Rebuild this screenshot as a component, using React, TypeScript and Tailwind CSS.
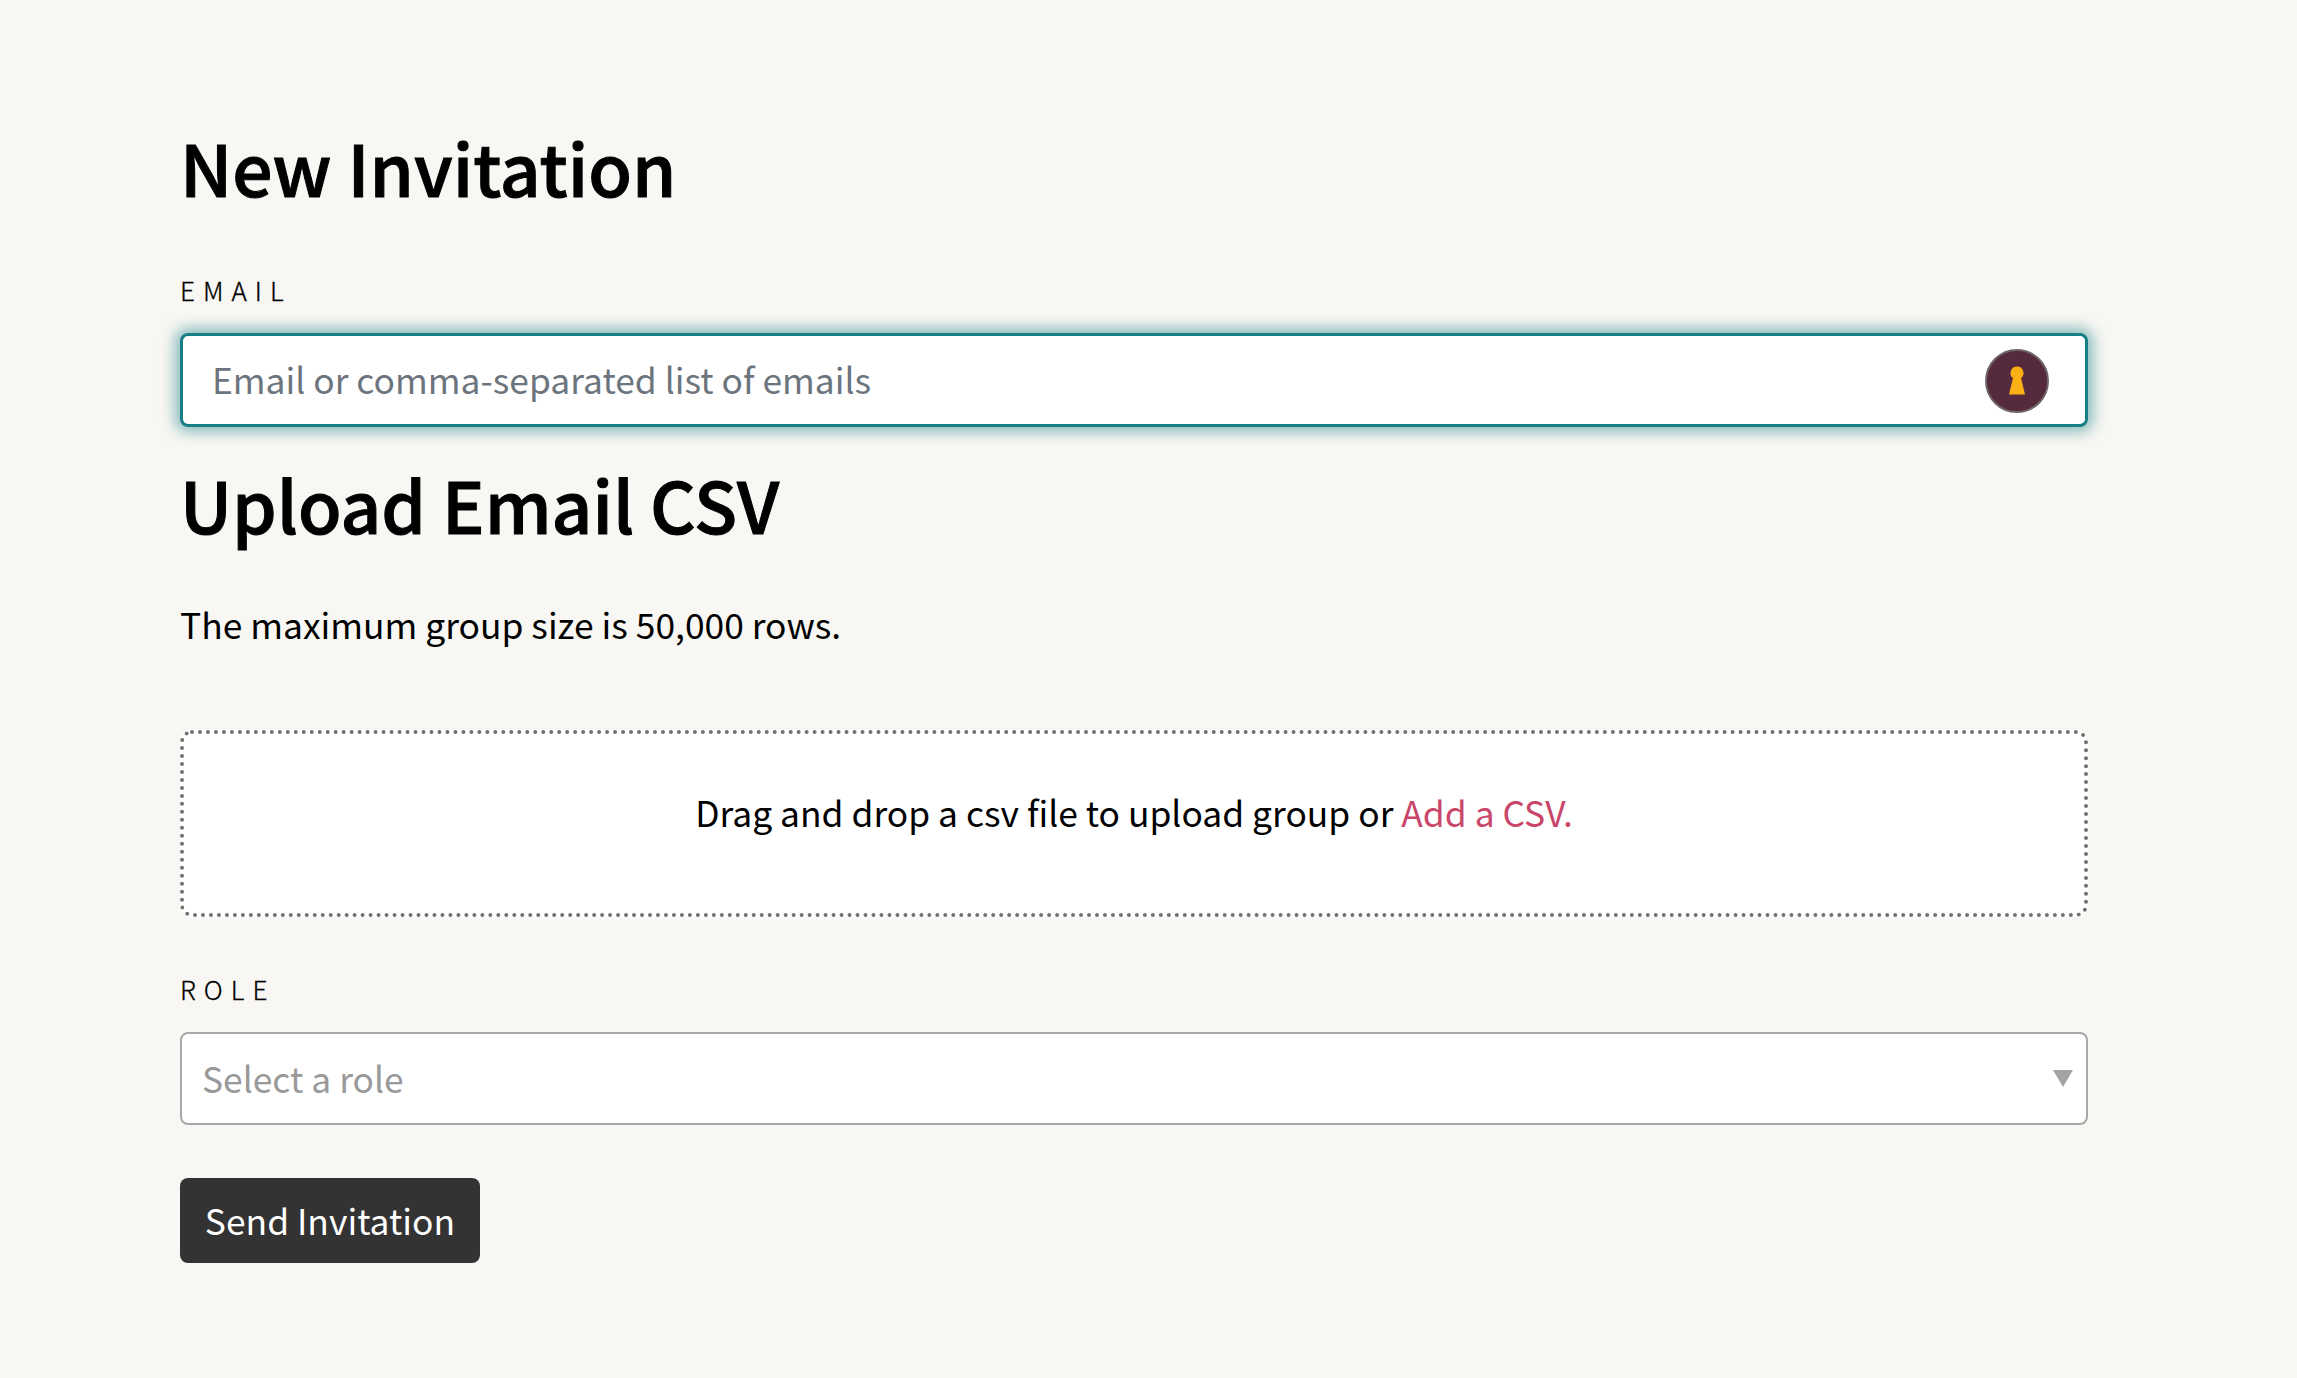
import React from 'react';

const font = "font-['Noto_Sans_CJK_JP','Noto_Sans',sans-serif]";

const KeyholeBadge = () => (
  <svg width="64" height="64" viewBox="0 0 64 64" className="mt-[2px] shrink-0">
    <circle cx="32" cy="32" r="31" fill="#552a3c" stroke="#6f6468" strokeWidth="2" />
    <path d="M32 17.5a6.5 6.5 0 0 1 4 11.6L40 45.5H24l4-16.4a6.5 6.5 0 0 1 4-11.6z" fill="#fbb116" />
  </svg>
);

const FieldLabel = ({ children }: { children: React.ReactNode }) => (
  <label className="block text-[26px] leading-[28px] font-light tracking-[0.31em] text-black [-webkit-text-stroke:0.3px_black]">{children}</label>
);

export default function App() {
  return (
    <div className={`${font} min-h-[1378px] bg-[#f8f7f3] px-[180px] pt-[122px] text-black`}>
      <div className="w-[1908px]">
        <h1 className="text-[71.2px] leading-[88px] font-medium [-webkit-text-stroke:1px_black]">New Invitation</h1>

        <div className="mt-[66px]">
          <FieldLabel>EMAIL</FieldLabel>
        </div>
        <div className="mt-[29px] flex h-[94px] items-center rounded-[8px] border-[3px] border-[#178086] bg-white pr-[36px] pl-[29px] shadow-[0_0_14px_5px_rgba(23,128,134,0.5)]">
          <input
            readOnly
            placeholder="Email or comma-separated list of emails"
            className="mb-[3px] min-w-0 flex-1 bg-transparent text-[35.4px] outline-none placeholder:text-[#6c757d]"
          />
          <KeyholeBadge />
        </div>

        <h2 className="mt-[32px] text-[71px] leading-[88px] font-medium [-webkit-text-stroke:1px_black]">Upload Email CSV</h2>

        <p className="mt-[49px] text-[35.4px] leading-[56px]">The maximum group size is 50,000 rows.</p>

        <div className="mt-[78px] flex h-[187px] justify-center rounded-[12px] border-[4px] border-dotted border-[#727272] bg-white pt-[50px] text-[35.4px] leading-[56px]">
          <span>
            Drag and drop a csv file to upload group or <span className="text-[#c9466a]">Add a CSV.</span>
          </span>
        </div>

        <div className="mt-[58px]">
          <FieldLabel>ROLE</FieldLabel>
        </div>
        <div className="mt-[29px] flex h-[93px] items-center justify-between rounded-[8px] border-2 border-[#a8a8a8] bg-white pr-[13px] pl-[20px] text-[35.4px] text-[#999999]">
          <span className="pb-[2px]">Select a role</span>
          <svg width="20" height="17" viewBox="0 0 20 17">
            <path d="M0 0h20L10 17z" fill="#a3a3a3" />
          </svg>
        </div>

        <button className="mt-[53px] flex h-[85px] w-[300px] items-center justify-center rounded-[8px] bg-[#333333] pb-[2px] text-[35.4px] text-white">
          Send Invitation
        </button>
      </div>
    </div>
  );
}
